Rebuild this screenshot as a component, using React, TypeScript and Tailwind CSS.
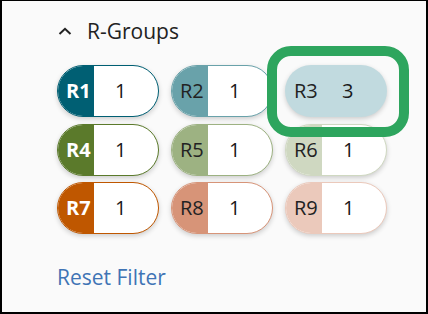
import React from "react";

type G = { id: string; n: number; bg: string; border: string; light: boolean; selected?: boolean };

const groups: G[] = [
  { id: "R1", n: 1, bg: "bg-[#005f73]", border: "border-[#005f73]", light: true },
  { id: "R2", n: 1, bg: "bg-[#69a2aa]", border: "border-[#69a2aa]", light: false },
  { id: "R3", n: 3, bg: "bg-[#c1dadf]", border: "border-[#c1dadf]", light: false, selected: true },
  { id: "R4", n: 1, bg: "bg-[#5b7a2b]", border: "border-[#5b7a2b]", light: true },
  { id: "R5", n: 1, bg: "bg-[#9db282]", border: "border-[#9db282]", light: false },
  { id: "R6", n: 1, bg: "bg-[#cfd8c1]", border: "border-[#cfd8c1]", light: false },
  { id: "R7", n: 1, bg: "bg-[#bf5700]", border: "border-[#bf5700]", light: true },
  { id: "R8", n: 1, bg: "bg-[#d79478]", border: "border-[#d79478]", light: false },
  { id: "R9", n: 1, bg: "bg-[#ebc9bb]", border: "border-[#ebc9bb]", light: false },
];

function Pill({ g }: { g: G }) {
  if (g.selected) {
    return (
      <div className={`relative flex h-[52px] w-[102px] items-center rounded-full ${g.bg} shadow-[0_2px_5px_rgba(0,0,0,0.18)]`}>
        <span className="w-[37px] pl-[9px] text-[20px] text-[#222]">{g.id}</span>
        <span className="pl-[20px] text-[20px] text-[#1a1a1a]">{g.n}</span>
        <div className="pointer-events-none absolute left-[-18px] top-[-19px] h-[91px] w-[142px] rounded-[24px] border-[10px] border-[#2ea55e]" />
      </div>
    );
  }
  return (
    <div className={`flex h-[52px] w-[102px] overflow-hidden rounded-full border ${g.border} bg-white shadow-[0_2px_5px_rgba(0,0,0,0.18)]`}>
      <span
        className={`flex w-[36px] items-center pl-[8px] text-[20px] ${g.bg} ${
          g.light ? "font-bold text-white" : "text-[#222]"
        }`}
      >
        {g.id}
      </span>
      <span className="flex flex-1 items-center pl-[21px] text-[20px] text-[#1a1a1a]">{g.n}</span>
    </div>
  );
}

export default function App() {
  return (
    <div
      className="h-[314px] w-[428px] border-b-2 border-l-2 border-r-2 border-t border-black bg-[#fafafa]"
      style={{ fontFamily: '"Open Sans", "Noto Sans", sans-serif' }}
    >
      <div className="pl-[55px] pt-[16px]">
        <div className="flex h-[28px] items-center">
          <svg width="14" height="9" viewBox="0 0 14 9" className="ml-[1px]">
            <polyline points="1.5,7 7,1.8 12.5,7" fill="none" stroke="#222" strokeWidth="2" />
          </svg>
          <span className="ml-[15px] text-[21px] font-medium leading-[28px] text-[#222]">R-Groups</span>
        </div>
        <div className="mt-[20px] grid grid-cols-[102px_102px_102px] gap-x-[12px] gap-y-[6.5px]">
          {groups.map((g) => (
            <Pill key={g.id} g={g} />
          ))}
        </div>
        <div className="mt-[30px] text-[21px] leading-[26px] text-[#3f74b5]">Reset Filter</div>
      </div>
    </div>
  );
}
